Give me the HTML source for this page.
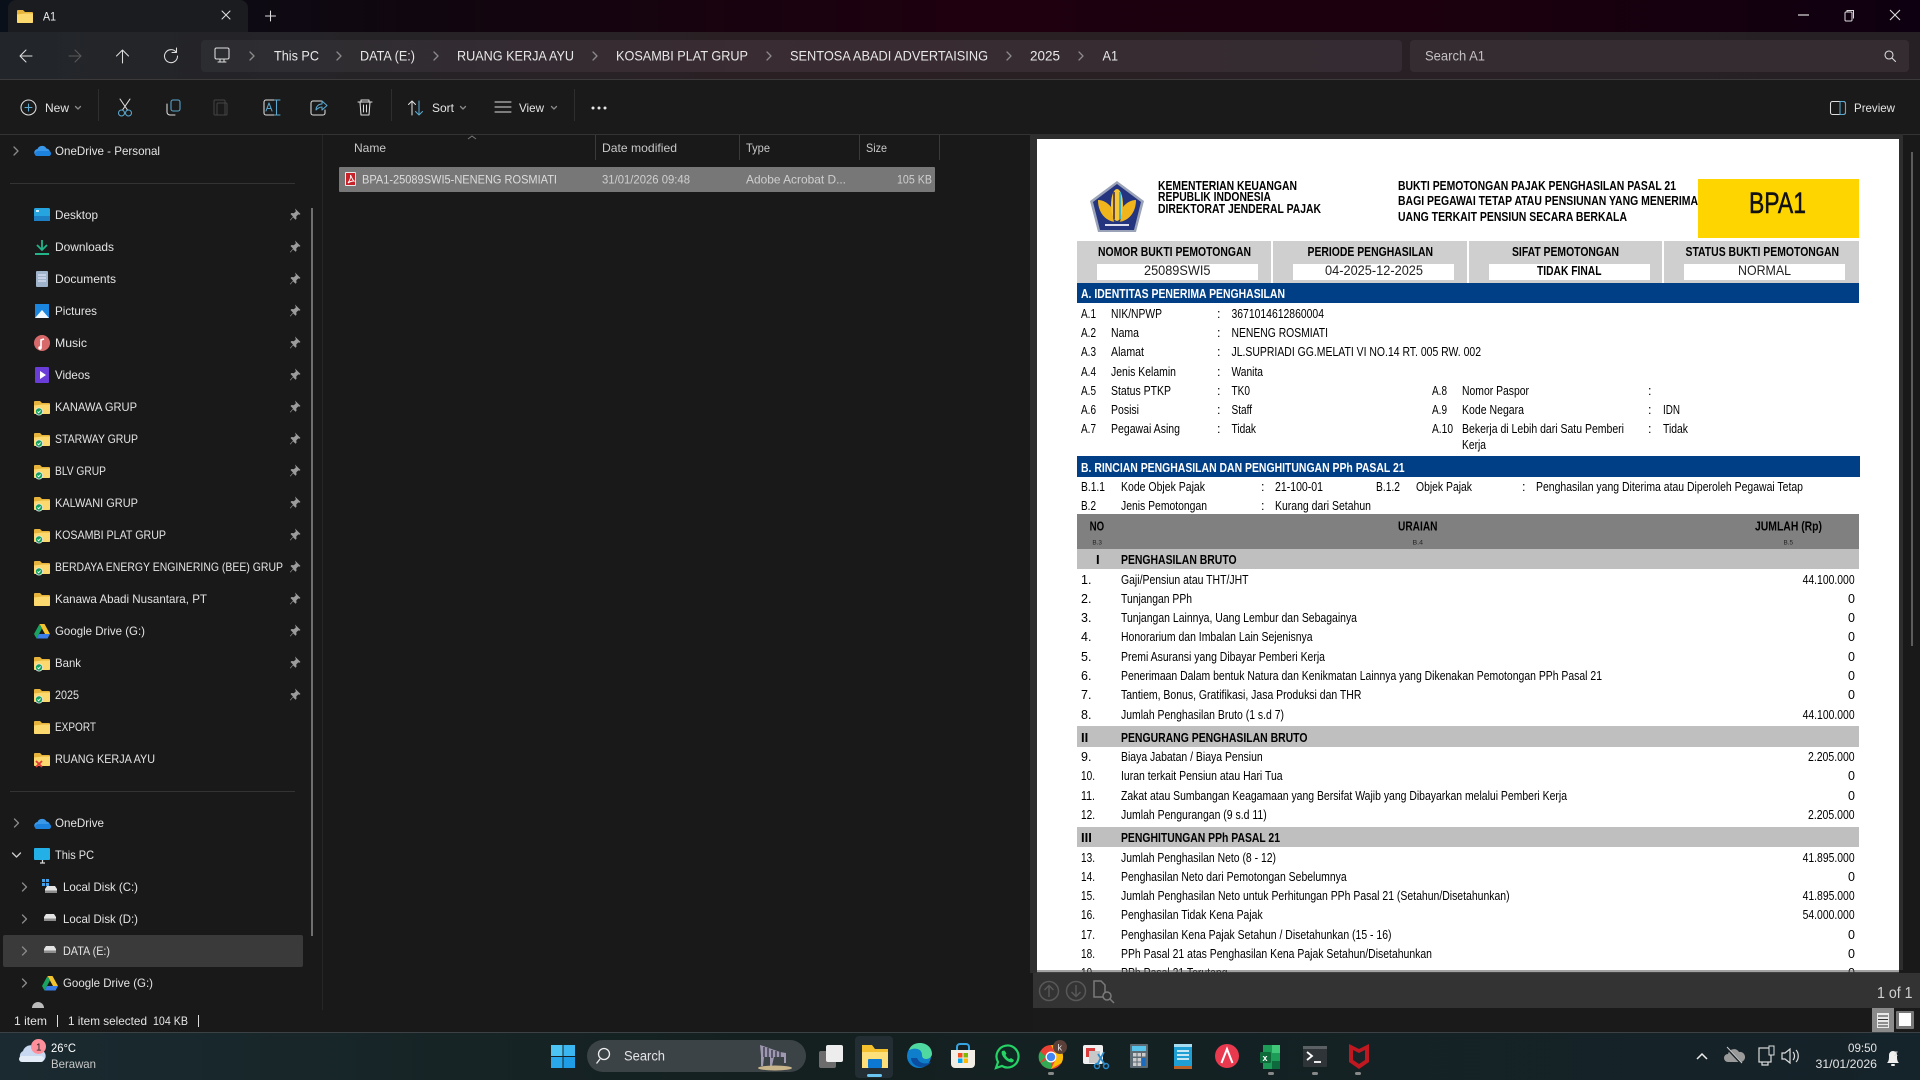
<!DOCTYPE html>
<html><head><meta charset="utf-8"><title>A1</title>
<style>
html,body{margin:0;padding:0;background:#191919;width:1920px;height:1080px;overflow:hidden}
svg{display:block}
text{font-family:"Liberation Sans",sans-serif;white-space:pre}
.n{font-size:12px;fill:#e4e4e4}
.a{font-size:14px;fill:#e8e8e8}
.h{font-size:12px;fill:#c8c8c8}
.r{font-size:12px;fill:#dcdcdc}
.p{font-size:12.5px;fill:#000}
.b{font-size:13px;font-weight:700;fill:#000}
.w{font-size:13px;font-weight:700;fill:#fff}
.s{font-size:6.5px;fill:#222}
.st{fill:none;stroke:#dedede;stroke-width:1.050;stroke-linecap:round;stroke-linejoin:round}
.bl{fill:none;stroke:#5aa9d0;stroke-width:1.050;stroke-linecap:round;stroke-linejoin:round}
.ch{fill:none;stroke:#8a8a8a;stroke-width:1.300;stroke-linecap:round;stroke-linejoin:round}
</style></head><body>
<svg width="1920" height="1080" viewBox="0 0 1920 1080" xmlns="http://www.w3.org/2000/svg">
<defs>
<linearGradient id="tg" x1="0" x2="1" y1="0" y2="0"><stop offset="0" stop-color="#0a1019"/><stop offset=".22" stop-color="#10060f"/><stop offset=".5" stop-color="#1e000f"/><stop offset=".78" stop-color="#1b000e"/><stop offset="1" stop-color="#0e0010"/></linearGradient>
<linearGradient id="ag" x1="0" x2="1" y1="0" y2="0"><stop offset="0" stop-color="#22262a"/><stop offset=".4" stop-color="#2a2024"/><stop offset="1" stop-color="#262024"/></linearGradient>
<linearGradient id="bg" x1="0" x2="1" y1="0" y2="0"><stop offset="0" stop-color="#2c2d31"/><stop offset=".45" stop-color="#392c32"/><stop offset="1" stop-color="#342c32"/></linearGradient>
<linearGradient id="tb" x1="0" x2="1" y1="0" y2="0"><stop offset="0" stop-color="#1a2a30"/><stop offset=".4" stop-color="#14201f"/><stop offset="1" stop-color="#15232a"/></linearGradient>
<g id="fo"><path d="M0 2a1 1 0 0 1 1-1h5l2 2h7a1 1 0 0 1 1 1v9a1 1 0 0 1-1 1H1a1 1 0 0 1-1-1z" fill="#e6b43a"/><path d="M0 5.500l8-1h8v8.500a1 1 0 0 1-1 1H1a1 1 0 0 1-1-1z" fill="#fcd96e"/></g>
<g id="fc"><use href="#fo"/><circle cx="5" cy="11.500" r="4" fill="#e8e8e8"/><circle cx="5" cy="11.500" r="3.200" fill="#12a05c"/><path d="M3.500 11.500l1.200 1.200 2-2.200" fill="none" stroke="#fff" stroke-width=".9"/></g>
<g id="pin"><path d="M5 .5l5.500 5.500-1.200.8-1-.4-2 2 .2 2.400-1 1-2.500-2.600L.5 12.500 0 12l3-3.500L.5 6l1-1 2.400.2 2-2-.4-1z" fill="#9c9c9c"/></g>
<g id="chv"><path d="M0 0l4 4-4 4" class="ch"/></g>
<g id="drv"><path d="M1 5l2-3h8l2 3v4H1z" fill="#e4e4e4"/><rect x="1" y="6.500" width="12" height="2.500" fill="#8c8c8c"/></g>
<g id="gd"><path d="M5.500 0h5l5.500 10h-5z" fill="#f4c430"/><path d="M5.500 0L0 10l2.500 4.500 5.500-10z" fill="#1aa260"/><path d="M2.500 14.500h11l2.500-4.500H5z" fill="#3b7de8"/></g>
<g id="cl"><path d="M4 12a3.500 3.500 0 0 1-.5-7A5 5 0 0 1 12.500 4.500 3.800 3.800 0 0 1 13 12z" fill="#3a98ea"/><path d="M1 11a3.500 3.500 0 0 1 4-4h8a2.500 2.500 0 0 1 2.500 5H3a2 2 0 0 1-2-1z" fill="#1c82de"/></g>
</defs>

<!-- base -->
<rect width="1920" height="1080" fill="#191919"/>
<rect width="1920" height="32" fill="url(#tg)"/>
<path d="M8 32V8a8 8 0 0 1 8-8h224a8 8 0 0 1 8 8v24z" fill="#1a1c20"/>
<rect y="32" width="1920" height="47" fill="url(#ag)"/>
<rect x="201" y="40" width="1201" height="32" rx="4" fill="url(#bg)"/>
<rect x="1410" y="40" width="499" height="32" rx="4" fill="#352c32"/>
<rect y="79" width="1920" height="1" fill="#3d3a3c"/>
<rect y="80" width="1920" height="54" fill="#1a1a1a"/>
<rect y="134" width="1920" height="1" fill="#333"/>

<!-- title bar -->
<use href="#fo" x="17" y="9"/>
<text class="n" x="43" y="20.500" textLength="13" lengthAdjust="spacingAndGlyphs" style="fill:#eee">A1</text>
<path d="M222 11l8 8M230 11l-8 8" class="st"/>
<path d="M270.500 11v10M265.500 16h10" class="st"/>
<path d="M1798 15h11" stroke="#ddd" stroke-width="1.200"/>
<rect x="1845" y="12" width="7" height="9" rx="1" fill="none" stroke="#ddd"/>
<path d="M1847 12v-1.500h6.500v8" fill="none" stroke="#ddd"/>
<path d="M1890 10l10 10M1900 10l-10 10" stroke="#ddd" stroke-width="1.100"/>

<!-- address row -->
<path d="M32 56H21M26 50l-6 6 6 6" class="st"/>
<path d="M69 56h11M75 50l6 6-6 6" class="st" style="stroke:#5a5a5a"/>
<path d="M122.500 63V50M116.500 56l6-6 6 6" class="st"/>
<path d="M176 52a6.500 6.500 0 1 0 1.500 4M176.500 48v4.500H172" class="st"/>
<rect x="215" y="48" width="14" height="11" rx="1.500" class="st"/><path d="M218 62h8" class="st"/><path d="M220 59v3M224 59v3" class="st"/>
<use href="#chv" x="250" y="52"/>
<text class="a" x="274" y="60.500" textLength="45" lengthAdjust="spacingAndGlyphs">This PC</text>
<use href="#chv" x="337" y="52"/>
<text class="a" x="360" y="60.500" textLength="55" lengthAdjust="spacingAndGlyphs">DATA (E:)</text>
<use href="#chv" x="434" y="52"/>
<text class="a" x="457" y="60.500" textLength="117" lengthAdjust="spacingAndGlyphs">RUANG KERJA AYU</text>
<use href="#chv" x="593" y="52"/>
<text class="a" x="616" y="60.500" textLength="132" lengthAdjust="spacingAndGlyphs">KOSAMBI PLAT GRUP</text>
<use href="#chv" x="767" y="52"/>
<text class="a" x="790" y="60.500" textLength="198" lengthAdjust="spacingAndGlyphs">SENTOSA ABADI ADVERTAISING</text>
<use href="#chv" x="1007" y="52"/>
<text class="a" x="1030" y="60.500" textLength="30" lengthAdjust="spacingAndGlyphs">2025</text>
<use href="#chv" x="1079" y="52"/>
<text class="a" x="1102.500" y="60.500" textLength="15.500" lengthAdjust="spacingAndGlyphs">A1</text>
<text class="a" x="1425" y="60.500" textLength="60" lengthAdjust="spacingAndGlyphs" style="fill:#c4c0c2">Search A1</text>
<circle cx="1889" cy="55" r="4" class="st"/><path d="M1892 58l3.500 3.500" class="st"/>

<!-- toolbar -->
<circle cx="28.500" cy="107.500" r="7.500" class="st"/><path d="M28.500 104v7M25 107.500h7" class="bl"/>
<text class="n" x="45" y="112" textLength="24" lengthAdjust="spacingAndGlyphs">New</text>
<path d="M75.500 106.500l2.500 2.500 2.500-2.500" class="ch"/>
<rect x="98" y="89" width="1" height="32" fill="#2e2e2e"/>
<path d="M120 99l7.500 11M130 99l-7.500 11" class="st"/><circle cx="121.500" cy="113" r="3" class="bl"/><circle cx="128.500" cy="113" r="3" class="bl"/>
<rect x="171" y="100" width="9" height="11" rx="2" class="bl"/><path d="M167 104v8a3 3 0 0 0 3 3h5" class="st"/>
<rect x="217" y="103" width="10" height="12" rx="1" fill="none" stroke="#444"/><rect x="214" y="100" width="11" height="15" rx="1" fill="none" stroke="#444"/>
<path d="M274 100h-8a2 2 0 0 0-2 2v11a2 2 0 0 0 2 2h8" class="st"/><path d="M266 111l3-8 3 8M267 108.500h4" class="bl"/><path d="M276.500 100v15M275 100h5M275 115h5" class="bl"/>
<path d="M322 101h-9a2 2 0 0 0-2 2v10a2 2 0 0 0 2 2h10a2 2 0 0 0 2-2v-3" class="st"/><path d="M316 110c0-4 3-6 6-6v-3l5 4.500-5 4.500v-3c-2.500 0-4 1-6 3z" class="bl"/>
<path d="M358 102h14M361 102v-2h8v2M360 102l1 13h8l1-13M363.500 105v7M366.500 105v7" class="st"/>
<rect x="391" y="89" width="1" height="32" fill="#2e2e2e"/>
<path d="M412 115v-14M408.500 104.500L412 101l3.500 3.500" class="st"/><path d="M419 101v14M415.500 111.500L419 115l3.500-3.500" class="bl"/>
<text class="n" x="432" y="112" textLength="22" lengthAdjust="spacingAndGlyphs">Sort</text>
<path d="M460.500 106.500l2.500 2.500 2.500-2.500" class="ch"/>
<path d="M495 102h16M495 107h16M495 112h16" class="st"/>
<text class="n" x="519" y="112" textLength="25" lengthAdjust="spacingAndGlyphs">View</text>
<path d="M551.500 106.500l2.500 2.500 2.500-2.500" class="ch"/>
<rect x="574" y="89" width="1" height="32" fill="#2e2e2e"/>
<circle cx="593" cy="108" r="1.500" fill="#e6e6e6"/><circle cx="599" cy="108" r="1.500" fill="#e6e6e6"/><circle cx="605" cy="108" r="1.500" fill="#e6e6e6"/>
<rect x="1830.500" y="101.500" width="15" height="13" rx="2" class="st"/><path d="M1840 101.500h3.500a2 2 0 0 1 2 2v9a2 2 0 0 1-2 2H1840z" class="bl"/>
<text class="n" x="1854" y="112" textLength="41" lengthAdjust="spacingAndGlyphs">Preview</text>

<!-- nav pane -->
<rect x="322" y="135" width="1" height="875" fill="#262626"/>
<rect x="311" y="208" width="2" height="728" fill="#6f6f6f"/>
<use href="#chv" x="14" y="147"/>
<use href="#cl" x="34" y="144"/>
<text class="n" x="55" y="155" textLength="105" lengthAdjust="spacingAndGlyphs">OneDrive - Personal</text>
<rect x="10" y="183" width="285" height="1" fill="#333"/>

<rect x="34" y="208" width="16" height="13" rx="1.500" fill="#25a4e0"/><rect x="34" y="216" width="16" height="5" fill="#1d7fc4"/><rect x="36" y="210" width="3" height="2" fill="#c8ecfa"/>
<text class="n" x="55" y="219" textLength="43" lengthAdjust="spacingAndGlyphs">Desktop</text>
<path d="M42 240v10M37 245l5 5 5-5" fill="none" stroke="#22b58a" stroke-width="1.800"/><rect x="35" y="253" width="14" height="2" fill="#22b58a"/>
<text class="n" x="55" y="251" textLength="59" lengthAdjust="spacingAndGlyphs">Downloads</text>
<rect x="36" y="271" width="12" height="16" rx="1" fill="#9fb3ca"/><path d="M38 275h8M38 278h8M38 281h8" stroke="#eef" stroke-width="1"/>
<text class="n" x="55" y="283" textLength="61" lengthAdjust="spacingAndGlyphs">Documents</text>
<rect x="35" y="304" width="14" height="14" fill="#1a86e0"/><path d="M35 318l7-8 7 8z" fill="#f2f8ff"/>
<text class="n" x="55" y="315" textLength="42" lengthAdjust="spacingAndGlyphs">Pictures</text>
<circle cx="42" cy="343" r="8" fill="#d8696a"/><path d="M41 348v-8l3-1" stroke="#fff" stroke-width="1.600" fill="none"/><circle cx="40" cy="348" r="1.700" fill="#fff"/>
<text class="n" x="55" y="347" textLength="32" lengthAdjust="spacingAndGlyphs">Music</text>
<rect x="35" y="367" width="14" height="16" rx="1" fill="#6a3dd8"/><path d="M40 371v8l6-4z" fill="#fff"/>
<text class="n" x="55" y="379" textLength="35" lengthAdjust="spacingAndGlyphs">Videos</text>
<use href="#fc" x="34" y="400"/><text class="n" x="55" y="411" textLength="82" lengthAdjust="spacingAndGlyphs">KANAWA GRUP</text>
<use href="#fc" x="34" y="432"/><text class="n" x="55" y="443" textLength="83" lengthAdjust="spacingAndGlyphs">STARWAY GRUP</text>
<use href="#fc" x="34" y="464"/><text class="n" x="55" y="475" textLength="51" lengthAdjust="spacingAndGlyphs">BLV GRUP</text>
<use href="#fc" x="34" y="496"/><text class="n" x="55" y="507" textLength="83" lengthAdjust="spacingAndGlyphs">KALWANI GRUP</text>
<use href="#fc" x="34" y="528"/><text class="n" x="55" y="539" textLength="111" lengthAdjust="spacingAndGlyphs">KOSAMBI PLAT GRUP</text>
<use href="#fc" x="34" y="560"/><text class="n" x="55" y="571" textLength="228" lengthAdjust="spacingAndGlyphs">BERDAYA ENERGY ENGINERING (BEE) GRUP</text>
<use href="#fo" x="34" y="592"/><text class="n" x="55" y="603" textLength="152" lengthAdjust="spacingAndGlyphs">Kanawa Abadi Nusantara, PT</text>
<use href="#gd" x="34" y="624"/><text class="n" x="55" y="635" textLength="90" lengthAdjust="spacingAndGlyphs">Google Drive (G:)</text>
<use href="#fc" x="34" y="656"/><text class="n" x="55" y="667" textLength="26" lengthAdjust="spacingAndGlyphs">Bank</text>
<use href="#fc" x="34" y="688"/><text class="n" x="55" y="699" textLength="24" lengthAdjust="spacingAndGlyphs">2025</text>
<use href="#fo" x="34" y="720"/><text class="n" x="55" y="731" textLength="41" lengthAdjust="spacingAndGlyphs">EXPORT</text>
<use href="#fo" x="34" y="752"/><path d="M36 761l6 6M42 761l-6 6" stroke="#e03a3a" stroke-width="1.800"/><text class="n" x="55" y="763" textLength="100" lengthAdjust="spacingAndGlyphs">RUANG KERJA AYU</text>
<g transform="translate(1,-1)"><use href="#pin" x="289" y="209"/><use href="#pin" x="289" y="241"/><use href="#pin" x="289" y="273"/><use href="#pin" x="289" y="305"/><use href="#pin" x="289" y="337"/><use href="#pin" x="289" y="369"/><use href="#pin" x="289" y="401"/><use href="#pin" x="289" y="433"/><use href="#pin" x="289" y="465"/><use href="#pin" x="289" y="497"/><use href="#pin" x="289" y="529"/><use href="#pin" x="289" y="561"/><use href="#pin" x="289" y="593"/><use href="#pin" x="289" y="625"/><use href="#pin" x="289" y="657"/><use href="#pin" x="289" y="689"/></g>
<rect x="10" y="791" width="285" height="1" fill="#333"/>
<use href="#chv" x="14.500" y="819"/><use href="#cl" x="34" y="817"/>
<text class="n" x="55" y="827" textLength="49" lengthAdjust="spacingAndGlyphs">OneDrive</text>
<path d="M12.500 853l4 4 4-4" class="ch" style="stroke:#ccc"/>
<rect x="34" y="848" width="16" height="12" rx="1" fill="#23b0e6"/><path d="M40 863h5M42.500 860v3" stroke="#d8d8d8" stroke-width="1.300"/>
<text class="n" x="55" y="859" textLength="39" lengthAdjust="spacingAndGlyphs">This PC</text>
<use href="#chv" x="22.500" y="883"/>
<rect x="42" y="879" width="3" height="3" fill="#46a0e8"/><rect x="46" y="879" width="3" height="3" fill="#46a0e8"/><rect x="42" y="883" width="3" height="3" fill="#46a0e8"/><rect x="46" y="883" width="3" height="3" fill="#46a0e8"/><use href="#drv" x="44" y="884"/>
<text class="n" x="63" y="891" textLength="75" lengthAdjust="spacingAndGlyphs">Local Disk (C:)</text>
<use href="#chv" x="22.500" y="915"/><use href="#drv" x="43" y="912"/>
<text class="n" x="63" y="923" textLength="75" lengthAdjust="spacingAndGlyphs">Local Disk (D:)</text>
<rect x="3" y="935" width="300" height="32" rx="2" fill="#3a3a3a"/>
<use href="#chv" x="22.500" y="947"/><use href="#drv" x="43" y="944"/>
<text class="n" x="63" y="955" textLength="47" lengthAdjust="spacingAndGlyphs">DATA (E:)</text>
<use href="#chv" x="22.500" y="979"/><use href="#gd" x="42" y="976"/>
<text class="n" x="63" y="987" textLength="90" lengthAdjust="spacingAndGlyphs">Google Drive (G:)</text>
<path d="M32 1008a6 6 0 0 1 12 0z" fill="#bbb"/>

<!-- list -->
<path d="M468 139l4-3 4 3" fill="none" stroke="#777" stroke-width="1"/>
<text class="h" x="354" y="152" textLength="32" lengthAdjust="spacingAndGlyphs">Name</text>
<rect x="595" y="135" width="1" height="25" fill="#3a3a3a"/>
<text class="h" x="602" y="152" textLength="75" lengthAdjust="spacingAndGlyphs">Date modified</text>
<rect x="739" y="135" width="1" height="25" fill="#3a3a3a"/>
<text class="h" x="746" y="152" textLength="24" lengthAdjust="spacingAndGlyphs">Type</text>
<rect x="859" y="135" width="1" height="25" fill="#3a3a3a"/>
<text class="h" x="866" y="152" textLength="21" lengthAdjust="spacingAndGlyphs">Size</text>
<rect x="939" y="135" width="1" height="25" fill="#3a3a3a"/>
<rect x="339" y="167" width="596" height="25" rx="1" fill="#777"/>
<rect x="345" y="172" width="11" height="14" rx="1" fill="#e8e8e8"/><rect x="346" y="173" width="9" height="12" fill="#c8232a"/><path d="M348 183c2-3 3-6 2.500-8 1 2 2 5 3.500 6-2 0-4 .500-6 2z" fill="none" stroke="#fff" stroke-width=".9"/>
<text class="r" x="362" y="183.500" textLength="195" lengthAdjust="spacingAndGlyphs">BPA1-25089SWI5-NENENG ROSMIATI</text>
<text class="r" x="602" y="183.500" textLength="88" lengthAdjust="spacingAndGlyphs" style="fill:#cfcfcf">31/01/2026 09:48</text>
<text class="r" x="746" y="183.500" textLength="100" lengthAdjust="spacingAndGlyphs" style="fill:#cfcfcf">Adobe Acrobat D...</text>
<text class="r" x="897" y="183.500" textLength="35" lengthAdjust="spacingAndGlyphs" style="fill:#cfcfcf">105 KB</text>

<!-- preview pane -->
<rect x="1030" y="134" width="873" height="839" fill="#2e2e2e"/>
<rect x="1037" y="139" width="862" height="833" fill="#fff"/>
<rect x="1911" y="152" width="2" height="494" fill="#5c5c5c"/>

<!-- pdf header -->
<path d="M1117 181l27 20-8 31h-38l-8-31z" fill="#9aa3b8"/>
<path d="M1117 184l24 18-7 28h-34l-7-28z" fill="#24347e"/>
<path d="M1117 222c-11 0-19-9-19-22 5 0 10 3 13 7l3 15z" fill="#f0b51c"/>
<path d="M1117 222c11 0 19-9 19-22-5 0-10 3-13 7l-3 15z" fill="#f0b51c"/>
<ellipse cx="1117" cy="205" rx="6" ry="16" fill="#f4c638"/>
<path d="M1114 192v27" stroke="#6a4a3a" stroke-width="2"/>
<path d="M1120 192v27" stroke="#3eb0c8" stroke-width="2"/>
<path d="M1105 225h24" stroke="#dde" stroke-width="2"/>
<text class="b" x="1158" y="190" textLength="139" lengthAdjust="spacingAndGlyphs">KEMENTERIAN KEUANGAN</text>
<text class="b" x="1158" y="201" textLength="113" lengthAdjust="spacingAndGlyphs">REPUBLIK INDONESIA</text>
<text class="b" x="1158" y="213" textLength="163" lengthAdjust="spacingAndGlyphs">DIREKTORAT JENDERAL PAJAK</text>
<text class="b" x="1398" y="190" textLength="278" lengthAdjust="spacingAndGlyphs">BUKTI PEMOTONGAN PAJAK PENGHASILAN PASAL 21</text>
<text class="b" x="1398" y="205" textLength="300" lengthAdjust="spacingAndGlyphs">BAGI PEGAWAI TETAP ATAU PENSIUNAN YANG MENERIMA</text>
<text class="b" x="1398" y="221" textLength="229" lengthAdjust="spacingAndGlyphs">UANG TERKAIT PENSIUN SECARA BERKALA</text>
<rect x="1698" y="179" width="161" height="59" fill="#ffd500"/>
<text x="1749" y="213" textLength="57" lengthAdjust="spacingAndGlyphs" style="font-size:30px;fill:#111;stroke:#111;stroke-width:.5">BPA1</text>
<rect x="1077" y="241" width="782" height="42" fill="#cfcfcf"/>
<rect x="1271" y="241" width="2" height="42" fill="#fff"/><rect x="1467" y="241" width="2" height="42" fill="#fff"/><rect x="1662" y="241" width="2" height="42" fill="#fff"/>
<text class="b" x="1098" y="256" textLength="153" lengthAdjust="spacingAndGlyphs">NOMOR BUKTI PEMOTONGAN</text>
<text class="b" x="1307.500" y="256" textLength="125.500" lengthAdjust="spacingAndGlyphs">PERIODE PENGHASILAN</text>
<text class="b" x="1512" y="256" textLength="107" lengthAdjust="spacingAndGlyphs">SIFAT PEMOTONGAN</text>
<text class="b" x="1685.500" y="256" textLength="153.500" lengthAdjust="spacingAndGlyphs">STATUS BUKTI PEMOTONGAN</text>
<rect x="1097" y="264" width="161" height="16" fill="#fff"/><rect x="1293" y="264" width="161" height="16" fill="#fff"/><rect x="1489" y="264" width="161" height="16" fill="#fff"/><rect x="1684" y="264" width="161" height="16" fill="#fff"/>
<text x="1144" y="275" textLength="66.500" lengthAdjust="spacingAndGlyphs" style="font-size:14px;fill:#222">25089SWI5</text>
<text x="1325" y="275" textLength="98" lengthAdjust="spacingAndGlyphs" style="font-size:14px;fill:#222">04-2025-12-2025</text>
<text class="b" x="1537" y="275" textLength="64.500" lengthAdjust="spacingAndGlyphs">TIDAK FINAL</text>
<text x="1738" y="275" textLength="53" lengthAdjust="spacingAndGlyphs" style="font-size:14px;fill:#222">NORMAL</text>
<rect x="1077" y="283" width="782" height="20" fill="#003e85"/>
<text class="w" x="1081" y="298" textLength="204" lengthAdjust="spacingAndGlyphs">A. IDENTITAS PENERIMA PENGHASILAN</text>

<!-- A rows -->
<g>
<text class="p" x="1081" y="318" textLength="15" lengthAdjust="spacingAndGlyphs">A.1</text><text class="p" x="1111" y="318" textLength="51" lengthAdjust="spacingAndGlyphs">NIK/NPWP</text><text class="p" x="1217" y="318">:</text><text class="p" x="1231.500" y="318" textLength="92.500" lengthAdjust="spacingAndGlyphs">3671014612860004</text>
<text class="p" x="1081" y="337" textLength="15" lengthAdjust="spacingAndGlyphs">A.2</text><text class="p" x="1111" y="337" textLength="28" lengthAdjust="spacingAndGlyphs">Nama</text><text class="p" x="1217" y="337">:</text><text class="p" x="1231.500" y="337" textLength="96.500" lengthAdjust="spacingAndGlyphs">NENENG ROSMIATI</text>
<text class="p" x="1081" y="356" textLength="15" lengthAdjust="spacingAndGlyphs">A.3</text><text class="p" x="1111" y="356" textLength="33" lengthAdjust="spacingAndGlyphs">Alamat</text><text class="p" x="1217" y="356">:</text><text class="p" x="1231.500" y="356" textLength="249.500" lengthAdjust="spacingAndGlyphs">JL.SUPRIADI GG.MELATI VI NO.14 RT. 005 RW. 002</text>
<text class="p" x="1081" y="376" textLength="15" lengthAdjust="spacingAndGlyphs">A.4</text><text class="p" x="1111" y="376" textLength="65" lengthAdjust="spacingAndGlyphs">Jenis Kelamin</text><text class="p" x="1217" y="376">:</text><text class="p" x="1231.500" y="376" textLength="31.500" lengthAdjust="spacingAndGlyphs">Wanita</text>
<text class="p" x="1081" y="395" textLength="15" lengthAdjust="spacingAndGlyphs">A.5</text><text class="p" x="1111" y="395" textLength="60" lengthAdjust="spacingAndGlyphs">Status PTKP</text><text class="p" x="1217" y="395">:</text><text class="p" x="1231.500" y="395" textLength="18.500" lengthAdjust="spacingAndGlyphs">TK0</text>
<text class="p" x="1432" y="395" textLength="15" lengthAdjust="spacingAndGlyphs">A.8</text><text class="p" x="1462" y="395" textLength="67" lengthAdjust="spacingAndGlyphs">Nomor Paspor</text><text class="p" x="1648" y="395">:</text>
<text class="p" x="1081" y="414" textLength="15" lengthAdjust="spacingAndGlyphs">A.6</text><text class="p" x="1111" y="414" textLength="28" lengthAdjust="spacingAndGlyphs">Posisi</text><text class="p" x="1217" y="414">:</text><text class="p" x="1231.500" y="414" textLength="20.500" lengthAdjust="spacingAndGlyphs">Staff</text>
<text class="p" x="1432" y="414" textLength="15" lengthAdjust="spacingAndGlyphs">A.9</text><text class="p" x="1462" y="414" textLength="62" lengthAdjust="spacingAndGlyphs">Kode Negara</text><text class="p" x="1648" y="414">:</text><text class="p" x="1663" y="414" textLength="17" lengthAdjust="spacingAndGlyphs">IDN</text>
<text class="p" x="1081" y="433" textLength="15" lengthAdjust="spacingAndGlyphs">A.7</text><text class="p" x="1111" y="433" textLength="69" lengthAdjust="spacingAndGlyphs">Pegawai Asing</text><text class="p" x="1217" y="433">:</text><text class="p" x="1231.500" y="433" textLength="24.500" lengthAdjust="spacingAndGlyphs">Tidak</text>
<text class="p" x="1432" y="433" textLength="21" lengthAdjust="spacingAndGlyphs">A.10</text><text class="p" x="1462" y="433" textLength="162" lengthAdjust="spacingAndGlyphs">Bekerja di Lebih dari Satu Pemberi</text><text class="p" x="1648" y="433">:</text><text class="p" x="1663" y="433" textLength="25" lengthAdjust="spacingAndGlyphs">Tidak</text>
<text class="p" x="1462" y="449" textLength="24" lengthAdjust="spacingAndGlyphs">Kerja</text>
</g>

<rect x="1077" y="456" width="783" height="21" fill="#003e85"/>
<text class="w" x="1081" y="472" textLength="323.600" lengthAdjust="spacingAndGlyphs">B. RINCIAN PENGHASILAN DAN PENGHITUNGAN PPh PASAL 21</text>
<g>
<text class="p" x="1081" y="491" textLength="24" lengthAdjust="spacingAndGlyphs">B.1.1</text><text class="p" x="1121" y="491" textLength="84" lengthAdjust="spacingAndGlyphs">Kode Objek Pajak</text><text class="p" x="1261" y="491">:</text><text class="p" x="1275" y="491" textLength="48" lengthAdjust="spacingAndGlyphs">21-100-01</text>
<text class="p" x="1376" y="491" textLength="24" lengthAdjust="spacingAndGlyphs">B.1.2</text><text class="p" x="1416" y="491" textLength="56" lengthAdjust="spacingAndGlyphs">Objek Pajak</text><text class="p" x="1522" y="491">:</text><text class="p" x="1536" y="491" textLength="267" lengthAdjust="spacingAndGlyphs">Penghasilan yang Diterima atau Diperoleh Pegawai Tetap</text>
<text class="p" x="1081" y="510" textLength="15" lengthAdjust="spacingAndGlyphs">B.2</text><text class="p" x="1121" y="510" textLength="86" lengthAdjust="spacingAndGlyphs">Jenis Pemotongan</text><text class="p" x="1261" y="510">:</text><text class="p" x="1275" y="510" textLength="96" lengthAdjust="spacingAndGlyphs">Kurang dari Setahun</text>
</g>
<rect x="1077" y="514" width="782" height="35" fill="#808080"/>
<text class="b" x="1089.600" y="530.500" textLength="14.500" lengthAdjust="spacingAndGlyphs">NO</text>
<text class="b" x="1398" y="530.500" textLength="39.500" lengthAdjust="spacingAndGlyphs">URAIAN</text>
<text class="b" x="1755" y="530.500" textLength="67" lengthAdjust="spacingAndGlyphs">JUMLAH (Rp)</text>
<text class="s" x="1092.400" y="544.500" textLength="9.600" lengthAdjust="spacingAndGlyphs">B.3</text>
<text class="s" x="1412.500" y="544.500" textLength="10.500" lengthAdjust="spacingAndGlyphs">B.4</text>
<text class="s" x="1783.500" y="544.500" textLength="9.500" lengthAdjust="spacingAndGlyphs">B.5</text>
<rect x="1077" y="549" width="782" height="20" fill="#bfbfbf"/>
<text class="b" x="1096" y="564">I</text>
<text class="b" x="1121" y="564" textLength="115.600" lengthAdjust="spacingAndGlyphs">PENGHASILAN BRUTO</text>

<g>
<text class="p" x="1081" y="584">1.</text><text class="p" x="1121" y="584" textLength="127.500" lengthAdjust="spacingAndGlyphs">Gaji/Pensiun atau THT/JHT</text><text class="p" x="1802.600" y="584" textLength="52" lengthAdjust="spacingAndGlyphs">44.100.000</text>
<text class="p" x="1081" y="603">2.</text><text class="p" x="1121" y="603" textLength="71" lengthAdjust="spacingAndGlyphs">Tunjangan PPh</text><text class="p" x="1848" y="603">0</text>
<text class="p" x="1081" y="622">3.</text><text class="p" x="1121" y="622" textLength="236" lengthAdjust="spacingAndGlyphs">Tunjangan Lainnya, Uang Lembur dan Sebagainya</text><text class="p" x="1848" y="622">0</text>
<text class="p" x="1081" y="641">4.</text><text class="p" x="1121" y="641" textLength="191.600" lengthAdjust="spacingAndGlyphs">Honorarium dan Imbalan Lain Sejenisnya</text><text class="p" x="1848" y="641">0</text>
<text class="p" x="1081" y="661">5.</text><text class="p" x="1121" y="661" textLength="204" lengthAdjust="spacingAndGlyphs">Premi Asuransi yang Dibayar Pemberi Kerja</text><text class="p" x="1848" y="661">0</text>
<text class="p" x="1081" y="680">6.</text><text class="p" x="1121" y="680" textLength="481" lengthAdjust="spacingAndGlyphs">Penerimaan Dalam bentuk Natura dan Kenikmatan Lainnya yang Dikenakan Pemotongan PPh Pasal 21</text><text class="p" x="1848" y="680">0</text>
<text class="p" x="1081" y="699">7.</text><text class="p" x="1121" y="699" textLength="240.400" lengthAdjust="spacingAndGlyphs">Tantiem, Bonus, Gratifikasi, Jasa Produksi dan THR</text><text class="p" x="1848" y="699">0</text>
<text class="p" x="1081" y="719">8.</text><text class="p" x="1121" y="719" textLength="163" lengthAdjust="spacingAndGlyphs">Jumlah Penghasilan Bruto (1 s.d 7)</text><text class="p" x="1802.600" y="719" textLength="52" lengthAdjust="spacingAndGlyphs">44.100.000</text>
</g>
<rect x="1077" y="726" width="782" height="21" fill="#bfbfbf"/>
<text class="b" x="1081" y="742">II</text>
<text class="b" x="1121" y="742" textLength="186.500" lengthAdjust="spacingAndGlyphs">PENGURANG PENGHASILAN BRUTO</text>
<g>
<text class="p" x="1081" y="761">9.</text><text class="p" x="1121" y="761" textLength="141.700" lengthAdjust="spacingAndGlyphs">Biaya Jabatan / Biaya Pensiun</text><text class="p" x="1808" y="761" textLength="46.600" lengthAdjust="spacingAndGlyphs">2.205.000</text>
<text class="p" x="1081" y="780" textLength="14" lengthAdjust="spacingAndGlyphs">10.</text><text class="p" x="1121" y="780" textLength="161.600" lengthAdjust="spacingAndGlyphs">Iuran terkait Pensiun atau Hari Tua</text><text class="p" x="1848" y="780">0</text>
<text class="p" x="1081" y="800" textLength="14" lengthAdjust="spacingAndGlyphs">11.</text><text class="p" x="1121" y="800" textLength="446" lengthAdjust="spacingAndGlyphs">Zakat atau Sumbangan Keagamaan yang Bersifat Wajib yang Dibayarkan melalui Pemberi Kerja</text><text class="p" x="1848" y="800">0</text>
<text class="p" x="1081" y="819" textLength="14" lengthAdjust="spacingAndGlyphs">12.</text><text class="p" x="1121" y="819" textLength="145.700" lengthAdjust="spacingAndGlyphs">Jumlah Pengurangan (9 s.d 11)</text><text class="p" x="1808" y="819" textLength="46.600" lengthAdjust="spacingAndGlyphs">2.205.000</text>
</g>
<rect x="1077" y="827" width="782" height="20" fill="#bfbfbf"/>
<text class="b" x="1081" y="842">III</text>
<text class="b" x="1121" y="842" textLength="159" lengthAdjust="spacingAndGlyphs">PENGHITUNGAN PPh PASAL 21</text>
<g>
<text class="p" x="1081" y="862" textLength="14" lengthAdjust="spacingAndGlyphs">13.</text><text class="p" x="1121" y="862" textLength="155" lengthAdjust="spacingAndGlyphs">Jumlah Penghasilan Neto (8 - 12)</text><text class="p" x="1802.600" y="862" textLength="52" lengthAdjust="spacingAndGlyphs">41.895.000</text>
<text class="p" x="1081" y="881" textLength="14" lengthAdjust="spacingAndGlyphs">14.</text><text class="p" x="1121" y="881" textLength="225.700" lengthAdjust="spacingAndGlyphs">Penghasilan Neto dari Pemotongan Sebelumnya</text><text class="p" x="1848" y="881">0</text>
<text class="p" x="1081" y="900" textLength="14" lengthAdjust="spacingAndGlyphs">15.</text><text class="p" x="1121" y="900" textLength="388.600" lengthAdjust="spacingAndGlyphs">Jumlah Penghasilan Neto untuk Perhitungan PPh Pasal 21 (Setahun/Disetahunkan)</text><text class="p" x="1802.600" y="900" textLength="52" lengthAdjust="spacingAndGlyphs">41.895.000</text>
<text class="p" x="1081" y="919" textLength="14" lengthAdjust="spacingAndGlyphs">16.</text><text class="p" x="1121" y="919" textLength="141.700" lengthAdjust="spacingAndGlyphs">Penghasilan Tidak Kena Pajak</text><text class="p" x="1802.600" y="919" textLength="52" lengthAdjust="spacingAndGlyphs">54.000.000</text>
<text class="p" x="1081" y="939" textLength="14" lengthAdjust="spacingAndGlyphs">17.</text><text class="p" x="1121" y="939" textLength="270.500" lengthAdjust="spacingAndGlyphs">Penghasilan Kena Pajak Setahun / Disetahunkan (15 - 16)</text><text class="p" x="1848" y="939">0</text>
<text class="p" x="1081" y="958" textLength="14" lengthAdjust="spacingAndGlyphs">18.</text><text class="p" x="1121" y="958" textLength="311" lengthAdjust="spacingAndGlyphs">PPh Pasal 21 atas Penghasilan Kena Pajak Setahun/Disetahunkan</text><text class="p" x="1848" y="958">0</text>
<text class="p" x="1081" y="977" textLength="14" lengthAdjust="spacingAndGlyphs">19.</text><text class="p" x="1121" y="977" textLength="106.500" lengthAdjust="spacingAndGlyphs">PPh Pasal 21 Terutang</text><text class="p" x="1848" y="977">0</text>
</g>

<!-- pdf bottom bar -->
<rect x="1033" y="973" width="887" height="35" fill="#333"/>
<rect x="1037" y="970" width="862" height="3" fill="#555" fill-opacity=".55"/>
<rect x="1899" y="970" width="21" height="3" fill="#1a1a1a"/>
<rect x="1033" y="1008" width="887" height="25" fill="#1a1a1a"/>
<circle cx="1049" cy="991" r="9.500" fill="none" stroke="#585858" stroke-width="1.500"/><path d="M1049 997v-11M1044.500 990l4.500-4.500 4.500 4.500" fill="none" stroke="#585858" stroke-width="1.500"/>
<circle cx="1076" cy="991" r="9.500" fill="none" stroke="#585858" stroke-width="1.500"/><path d="M1076 985v11M1071.500 992l4.500 4.500 4.500-4.500" fill="none" stroke="#585858" stroke-width="1.500"/>
<path d="M1094 981h7l4 4v12h-11z" fill="none" stroke="#7a7a7a" stroke-width="1.500"/><circle cx="1107" cy="996" r="4" fill="#333" stroke="#7a7a7a" stroke-width="1.500"/><path d="M1110 999l4 4" stroke="#7a7a7a" stroke-width="1.500"/>
<text x="1877" y="998" textLength="35.500" lengthAdjust="spacingAndGlyphs" style="font-size:16px;fill:#d0d0d0">1 of 1</text>
<rect x="1872" y="1008" width="22" height="24" fill="#8a8a8a"/><rect x="1877" y="1013" width="12" height="15" fill="#e8e8e8"/><path d="M1878 1016h10M1878 1019.500h10M1878 1023h10M1878 1026h10" stroke="#333" stroke-width="1"/>
<rect x="1896" y="1011" width="18" height="18" rx="1" fill="#777"/><rect x="1899" y="1013" width="12" height="13" fill="#fff"/>

<!-- status bar -->
<text class="n" x="14" y="1025" textLength="33" lengthAdjust="spacingAndGlyphs">1 item</text>
<rect x="57" y="1015" width="1" height="12" fill="#ddd"/>
<text class="n" x="68" y="1025" textLength="79" lengthAdjust="spacingAndGlyphs">1 item selected</text>
<text class="n" x="153" y="1025" textLength="35" lengthAdjust="spacingAndGlyphs">104 KB</text>
<rect x="198" y="1015" width="1" height="12" fill="#ddd"/>

<!-- taskbar -->
<rect y="1033" width="1920" height="47" fill="url(#tb)"/>
<rect y="1032" width="1920" height="1" fill="#3b4144"/>
<path d="M24 1062a6 6 0 0 1-1-11 8 8 0 0 1 15-1 6 6 0 0 1 3 12z" fill="#c8d8f0"/><rect x="19" y="1056" width="25" height="6" rx="3" fill="#e4ecf8"/>
<circle cx="38.500" cy="1046.500" r="7.500" fill="#ff8f9b"/>
<text x="36" y="1050.500" style="font-size:10px;fill:#222">1</text>
<text class="n" x="51" y="1052" textLength="25" lengthAdjust="spacingAndGlyphs" style="fill:#fff">26°C</text>
<text class="n" x="51" y="1068" textLength="45" lengthAdjust="spacingAndGlyphs" style="fill:#c8c8c8">Berawan</text>
<!-- win -->
<rect x="551" y="1045" width="11.500" height="11" fill="#4cc4f4"/><rect x="563.500" y="1045" width="11.500" height="11" fill="#3cb6f0"/><rect x="551" y="1057" width="11.500" height="11" fill="#2aa8ec"/><rect x="563.500" y="1057" width="11.500" height="11" fill="#1e9ce6"/>
<rect x="587" y="1040" width="219" height="32" rx="16" fill="#3c4347"/>
<circle cx="604" cy="1054" r="5.500" fill="none" stroke="#eee" stroke-width="1.300"/><path d="M600 1059l-3.500 4.500" stroke="#eee" stroke-width="1.300"/>
<text class="n" x="624" y="1060.500" textLength="41" lengthAdjust="spacingAndGlyphs" style="font-size:13.500px;fill:#e4e4e4">Search</text>
<path d="M760 1045l6 2 14 5 6 1v10h-2v-6h-10l-2 9h-2v-9l-6 0-1 9h-2v-11z" fill="#9e98b0"/><path d="M764 1047v10M768 1048v9M772 1050v8M776 1051v6M780 1052v5" stroke="#2a2a38" stroke-width="1.200"/><ellipse cx="775" cy="1068" rx="17" ry="2.500" fill="#c8b48a"/>
<rect x="819" y="1051" width="17" height="17" rx="2" fill="#6c6c6c"/><rect x="826" y="1045" width="17" height="17" rx="2" fill="#ededed"/>
<!-- explorer -->
<rect x="855" y="1036" width="38" height="42" rx="4" fill="#222e33"/>
<path d="M862 1045h10l3 4h13v19h-26z" fill="#f4c02e"/><path d="M862 1052h26v16h-26z" fill="#fde07a"/><rect x="868" y="1059" width="14" height="9" rx="1" fill="#0c78d2"/>
<rect x="867" y="1074" width="15" height="3" rx="1.500" fill="#6ac6f0"/>
<!-- edge -->
<circle cx="919" cy="1056" r="12" fill="#0f7fcc"/><path d="M909 1050c2-6 8-7 11-7 7 0 12 5 12 11 0 3-3 5-6 5-3 0-4-2-4-4 0-6-6-7-10-6z" fill="#4fd8a0"/><path d="M911 1058c0 5 5 9 10 9 4 0 8-2 10-5-6 3-12 1-14-4z" fill="#0b4ea0"/>
<!-- store -->
<path d="M951 1050h24v14a4 4 0 0 1-4 4h-16a4 4 0 0 1-4-4z" fill="#f2eee6"/><path d="M957 1050v-3a3 3 0 0 1 3-3h6a3 3 0 0 1 3 3v3" fill="none" stroke="#35a4e0" stroke-width="2"/><rect x="958" y="1053" width="4.500" height="4.500" fill="#f25022"/><rect x="963.500" y="1053" width="4.500" height="4.500" fill="#7fba00"/><rect x="958" y="1058.500" width="4.500" height="4.500" fill="#00a4ef"/><rect x="963.500" y="1058.500" width="4.500" height="4.500" fill="#ffb900"/>
<!-- whatsapp -->
<path d="M996 1068l2-6a11 11 0 1 1 4 4z" fill="#0f2a22" stroke="#25d366" stroke-width="2.200"/><path d="M1002 1051c-1 2 0 5 3 8s6 4 8 3l1-2-3-2-1.500 1c-1.500-.500-3-2-4-4l1-1.500-2-3z" fill="#25d366"/>
<!-- chrome -->
<circle cx="1051" cy="1057" r="12" fill="#ea4335"/><path d="M1051 1057l-10.500 6a12 12 0 0 0 10.500 6z" fill="#34a853"/><path d="M1051 1045a12 12 0 0 1 10.500 18L1051 1069l6-12z" fill="#fbbc05"/><path d="M1040 1051.500a12 12 0 0 0 0 11l6-6z" fill="#34a853"/>
<circle cx="1051" cy="1057" r="5.500" fill="#fff"/><circle cx="1051" cy="1057" r="4.200" fill="#4285f4"/>
<circle cx="1060" cy="1047" r="7" fill="#5a4038"/><text x="1057.500" y="1050.500" style="font-size:9px;fill:#eee">k</text>
<rect x="1048" y="1072" width="6" height="3" rx="1.500" fill="#888"/>
<!-- snip -->
<rect x="1083" y="1045" width="20" height="19" rx="2" fill="#f0f0f0"/><rect x="1086" y="1048" width="9" height="9" fill="#d83a3a"/><rect x="1089" y="1051" width="11" height="12" fill="#c8c8c8"/><path d="M1104 1052l-7 13M1098 1054l7 11" stroke="#2a8ccc" stroke-width="1.800"/><circle cx="1097" cy="1066" r="2.500" fill="none" stroke="#2a8ccc" stroke-width="1.500"/><circle cx="1106" cy="1066" r="2.500" fill="none" stroke="#2a8ccc" stroke-width="1.500"/>
<!-- calc -->
<rect x="1130" y="1044" width="18" height="24" rx="1" fill="#5c6a74"/><rect x="1132" y="1046" width="14" height="5" fill="#58c4ec"/><rect x="1133" y="1053" width="3.500" height="3.500" fill="#ccc"/><rect x="1137.500" y="1053" width="3.500" height="3.500" fill="#ccc"/><rect x="1142" y="1053" width="3.500" height="3.500" fill="#ccc"/><rect x="1133" y="1058" width="3.500" height="3.500" fill="#ccc"/><rect x="1137.500" y="1058" width="3.500" height="3.500" fill="#ccc"/><rect x="1142" y="1058" width="3.500" height="8" fill="#1a6ac0"/><rect x="1133" y="1062.500" width="3.500" height="3.500" fill="#ccc"/><rect x="1137.500" y="1062.500" width="3.500" height="3.500" fill="#ccc"/>
<!-- notepad -->
<rect x="1174" y="1044" width="18" height="24" rx="1" fill="#1f9fd4"/><rect x="1174" y="1044" width="18" height="3" fill="#a8dcf0"/><path d="M1177 1051h12M1177 1055h12M1177 1059h12" stroke="#fff" stroke-width="1.500"/><rect x="1174" y="1066" width="18" height="3" fill="#b8622a"/>
<!-- angular -->
<circle cx="1227" cy="1056" r="12" fill="#e8394f"/><path d="M1221.500 1063l5.500-14 5.500 14" fill="none" stroke="#fff" stroke-width="2"/>
<!-- excel -->
<path d="M1263 1045h17v24h-17z" fill="#1d9c58"/><rect x="1272" y="1045" width="8" height="8" fill="#40c878"/><rect x="1272" y="1061" width="8" height="8" fill="#0c6a3c"/><rect x="1260" y="1052" width="11" height="11" rx="1" fill="#0f6a3a"/>
<text x="1262.500" y="1061" style="font-size:9px;font-weight:700;fill:#fff">x</text>
<rect x="1268" y="1072" width="6" height="3" rx="1.500" fill="#888"/>
<!-- terminal -->
<rect x="1303" y="1046" width="24" height="21" rx="1" fill="#2e3438"/><rect x="1303" y="1046" width="24" height="3" fill="#5a6064"/><path d="M1307 1052l5 4-5 4" fill="none" stroke="#fff" stroke-width="1.800"/><path d="M1314 1062h7" stroke="#fff" stroke-width="1.800"/>
<rect x="1312" y="1072" width="6" height="3" rx="1.500" fill="#888"/>
<!-- mcafee -->
<path d="M1349 1044l10 5 10-5v18l-10 7-10-7z" fill="#c01820"/><path d="M1353 1050l6 3 6-3v10l-6 4-6-4z" fill="#1a2428"/>
<rect x="1355" y="1072" width="6" height="3" rx="1.500" fill="#888"/>
<!-- tray -->
<path d="M1697 1059l5-5 5 5" fill="none" stroke="#eee" stroke-width="1.500"/>
<path d="M1728 1062a4 4 0 0 1 0-8 6 6 0 0 1 11-2 5 5 0 0 1 2 10z" fill="#9a9a9a"/><path d="M1727 1048l15 16" stroke="#1a2428" stroke-width="2.500"/><path d="M1727 1047l15 16" stroke="#ccc" stroke-width="1"/>
<rect x="1759" y="1048" width="12" height="14" fill="none" stroke="#ddd" stroke-width="1.200"/><path d="M1762 1062v3h6v-3" fill="none" stroke="#ddd" stroke-width="1.200"/><rect x="1769" y="1046" width="5" height="9" fill="#15232a" stroke="#ddd"/>
<path d="M1782 1053h3l5-4v14l-5-4h-3zM1793 1052c2 2 2 6 0 8M1796 1050c3 3 3 9 0 12" fill="none" stroke="#ddd" stroke-width="1.200"/>
<text class="n" x="1848" y="1052" textLength="29" lengthAdjust="spacingAndGlyphs">09:50</text>
<text class="n" x="1815.500" y="1068" textLength="61.500" lengthAdjust="spacingAndGlyphs">31/01/2026</text>
<path d="M1887 1063c2-2 2-4 2-8a4 4 0 0 1 8 0c0 4 0 6 2 8z" fill="#eee"/><rect x="1891" y="1064" width="4" height="2" rx="1" fill="#eee"/>
<text x="1894" y="1056" style="font-size:8px;fill:#ddd">z</text>
</svg>
</body></html>
